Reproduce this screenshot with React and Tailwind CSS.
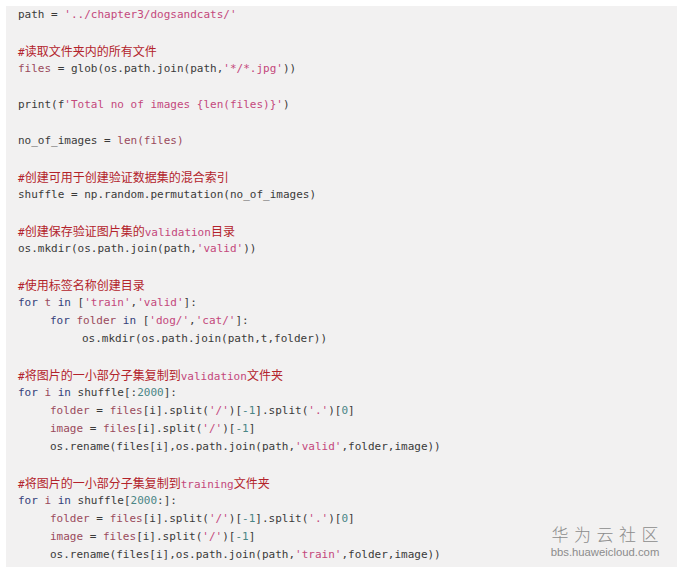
import React from "react";

const D = "text-[#3a3a3a]";
const S = "text-[#c4487c]";
const C = "text-[#b3232b]";
const K = "text-[#34407a]";
const N = "text-[#4a8585]";
const V = "text-[#9a4a5c]";

function T({ c, children }) {
  return <span className={c}>{children}</span>;
}

function Cm({ children }) {
  return <span className={`${C} text-[12px] font-['Noto_Sans_CJK_SC',sans-serif]`}>{children}</span>;
}

function Line({ indent = 0, children }) {
  const pad = indent === 0 ? "pl-[12px]" : indent === 1 ? "pl-[44px]" : "pl-[76px]";
  return <div className={`h-[18px] leading-[18px] whitespace-pre ${pad}`}>{children}</div>;
}

export default function App() {
  return (
    <div className="w-[678px] h-[567px] bg-white pt-[6px] pl-[6px] pr-[1px] overflow-hidden">
      <div className="relative h-full bg-[#f2f1f1] font-['DejaVu_Sans_Mono','Noto_Sans_CJK_SC',monospace] text-[11px] text-[#3a3a3a]">
        <Line><T c={D}>path = </T><T c={S}>'../chapter3/dogsandcats/'</T></Line>
        <Line />
        <Line><T c={C}>#</T><Cm>读取文件夹内的所有文件</Cm></Line>
        <Line><T c={V}>files</T><T c={D}> = glob(os.path.join(path,</T><T c={S}>'*/*.jpg'</T><T c={D}>))</T></Line>
        <Line />
        <Line><T c={D}>print(f</T><T c={S}>'Total no of images {"{"}len(files){"}"}'</T><T c={D}>)</T></Line>
        <Line />
        <Line><T c={D}>no_of_images = </T><T c={V}>len(files)</T></Line>
        <Line />
        <Line><T c={C}>#</T><Cm>创建可用于创建验证数据集的混合索引</Cm></Line>
        <Line><T c={D}>shuffle = np.random.permutation(no_of_images)</T></Line>
        <Line />
        <Line><T c={C}>#</T><Cm>创建保存验证图片集的</Cm><T c={S}>validation</T><Cm>目录</Cm></Line>
        <Line><T c={D}>os.mkdir(os.path.join(path,</T><T c={S}>'valid'</T><T c={D}>))</T></Line>
        <Line />
        <Line><T c={C}>#</T><Cm>使用标签名称创建目录</Cm></Line>
        <Line><T c={K}>for</T><T c={V}> t </T><T c={K}>in</T><T c={D}> [</T><T c={S}>'train'</T><T c={D}>,</T><T c={S}>'valid'</T><T c={D}>]:</T></Line>
        <Line indent={1}><T c={K}>for</T><T c={V}> folder </T><T c={K}>in</T><T c={D}> [</T><T c={S}>'dog/'</T><T c={D}>,</T><T c={S}>'cat/'</T><T c={D}>]:</T></Line>
        <Line indent={2}><T c={D}>os.mkdir(os.path.join(path,t,folder))</T></Line>
        <Line />
        <Line><T c={C}>#</T><Cm>将图片的一小部分子集复制到</Cm><T c={S}>validation</T><Cm>文件夹</Cm></Line>
        <Line><T c={K}>for</T><T c={V}> i </T><T c={K}>in</T><T c={D}> shuffle[:</T><T c={N}>2000</T><T c={D}>]:</T></Line>
        <Line indent={1}><T c={V}>folder</T><T c={D}> = </T><T c={V}>files</T><T c={D}>[i].split(</T><T c={S}>'/'</T><T c={D}>)[</T><T c={N}>-1</T><T c={D}>].split(</T><T c={S}>'.'</T><T c={D}>)[</T><T c={N}>0</T><T c={D}>]</T></Line>
        <Line indent={1}><T c={V}>image</T><T c={D}> = </T><T c={V}>files</T><T c={D}>[i].split(</T><T c={S}>'/'</T><T c={D}>)[</T><T c={N}>-1</T><T c={D}>]</T></Line>
        <Line indent={1}><T c={D}>os.rename(files[i],os.path.join(path,</T><T c={S}>'valid'</T><T c={D}>,folder,image))</T></Line>
        <Line />
        <Line><T c={C}>#</T><Cm>将图片的一小部分子集复制到</Cm><T c={S}>training</T><Cm>文件夹</Cm></Line>
        <Line><T c={K}>for</T><T c={V}> i </T><T c={K}>in</T><T c={D}> shuffle[</T><T c={N}>2000</T><T c={D}>:]:</T></Line>
        <Line indent={1}><T c={V}>folder</T><T c={D}> = </T><T c={V}>files</T><T c={D}>[i].split(</T><T c={S}>'/'</T><T c={D}>)[</T><T c={N}>-1</T><T c={D}>].split(</T><T c={S}>'.'</T><T c={D}>)[</T><T c={N}>0</T><T c={D}>]</T></Line>
        <Line indent={1}><T c={V}>image</T><T c={D}> = </T><T c={V}>files</T><T c={D}>[i].split(</T><T c={S}>'/'</T><T c={D}>)[</T><T c={N}>-1</T><T c={D}>]</T></Line>
        <Line indent={1}><T c={D}>os.rename(files[i],os.path.join(path,</T><T c={S}>'train'</T><T c={D}>,folder,image))</T></Line>

        <div className="absolute right-[13px] bottom-[8px] flex flex-col items-center gap-[2px] text-[#8c8c8c]">
          <div className="text-[17px] leading-[16px] tracking-[5.5px] pl-[5.5px] font-['Liberation_Sans','Noto_Sans_CJK_SC',sans-serif] font-light">华为云社区</div>
          <div className="text-[11.3px] leading-[13px] font-['Liberation_Sans',sans-serif]">bbs.huaweicloud.com</div>
        </div>
      </div>
    </div>
  );
}
